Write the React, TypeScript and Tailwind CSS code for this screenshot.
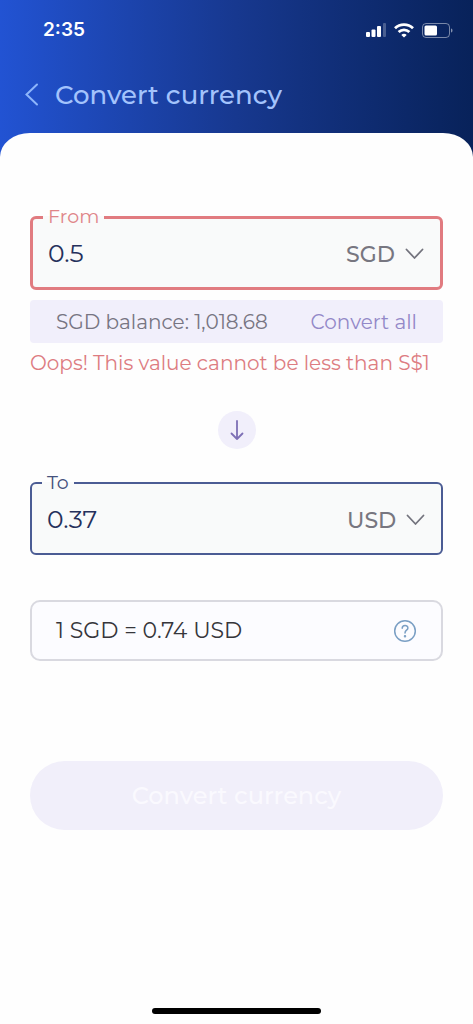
import { useState } from 'react'

const CURRENCIES = ['SGD', 'USD', 'EUR', 'GBP']

function StatusBar() {
  return (
    <div className="flex h-15 items-center justify-between pr-5 pl-[43px]">
      <span className="font-['Inter',sans-serif] text-[19px] font-semibold text-white">2:35</span>
      <div className="flex items-center gap-2" aria-hidden="true">
        <svg width="20" height="14" viewBox="0 0 20 14" fill="#fff">
          <rect x="0" y="9" width="4" height="5" rx="1" />
          <rect x="5.5" y="6.5" width="4" height="7.5" rx="1" />
          <rect x="11" y="3" width="4" height="11" rx="1" />
          <rect x="17" y="0" width="3" height="14" rx="1" opacity="0.25" />
        </svg>
        <svg width="20" height="15" viewBox="0 0 20 15" fill="none" stroke="#fff" strokeWidth="2.8">
          <path d="M1 5.2C6 .4 14 .4 19 5.2" />
          <path d="M4.6 9c3.1-2.9 7.7-2.9 10.8 0" />
          <path d="M10 14.6 7.3 11.9c1.5-1.4 3.9-1.4 5.4 0z" fill="#fff" stroke="none" />
        </svg>
        <svg width="31" height="15" viewBox="0 0 31 15" fill="none">
          <rect x="0.5" y="0.5" width="27" height="14" rx="3.5" stroke="#fff" strokeOpacity="0.45" />
          <rect x="2.5" y="2.5" width="12.5" height="10" rx="1.5" fill="#fff" />
          <path d="M29 5.5c2 .6 2 3.4 0 4z" fill="#fff" fillOpacity="0.5" />
        </svg>
      </div>
    </div>
  )
}

function ChevronIcon() {
  return (
    <svg
      className="pointer-events-none col-start-1 row-start-1 self-center justify-self-end"
      width="19"
      height="12"
      viewBox="0 0 19 12"
      fill="none"
      stroke="#73737d"
      strokeWidth="1.8"
      strokeLinecap="round"
      strokeLinejoin="round"
    >
      <path d="M1.5 1.5 9.5 10l8-8.5" />
    </svg>
  )
}

type AmountFieldProps = {
  id: string
  label: string
  value: string
  onChange: (value: string) => void
  currency: string
  onCurrencyChange: (currency: string) => void
  invalid?: boolean
}

function AmountField({ id, label, value, onChange, currency, onCurrencyChange, invalid }: AmountFieldProps) {
  return (
    <fieldset
      className={
        invalid
          ? 'min-w-0 rounded-md border-[3px] border-[#e17b80] bg-[#f9fafa] pr-4 pl-2.5'
          : 'min-w-0 rounded-md border-2 border-[#4b5c94] bg-[#f9fafa] pr-4 pl-2.5'
      }
    >
      <legend
        className={invalid ? 'px-[5px] text-[19px] leading-5 text-[#df8589]' : 'px-[5px] text-[19px] leading-5 text-[#46527d]'}
      >
        <label htmlFor={id}>{label}</label>
      </legend>
      <div className="flex h-15 items-center justify-between pb-1.5 pl-[5px]">
        <input
          id={id}
          inputMode="decimal"
          className="w-0 flex-1 bg-transparent text-[25px] text-[#25305c] outline-none"
          value={value}
          onChange={(e) => onChange(e.target.value)}
        />
        <div className="grid w-[78px]">
          <select
            aria-label={`${label} currency`}
            className="col-start-1 row-start-1 appearance-none bg-transparent text-[22px] font-medium text-[#777680] outline-none"
            value={currency}
            onChange={(e) => onCurrencyChange(e.target.value)}
          >
            {CURRENCIES.map((c) => (
              <option key={c}>{c}</option>
            ))}
          </select>
          <ChevronIcon />
        </div>
      </div>
    </fieldset>
  )
}

export default function App() {
  const [from, setFrom] = useState('0.5')
  const [to, setTo] = useState('0.37')
  const [fromCurrency, setFromCurrency] = useState('SGD')
  const [toCurrency, setToCurrency] = useState('USD')

  const tooLow = Number(from) < 1

  return (
    <div className="flex min-h-screen flex-col bg-linear-to-r from-[#2253d3] via-[#17388f] to-[#08225a] font-['Montserrat','Inter',sans-serif]">
      <StatusBar />
      <header className="flex h-[73px] items-center gap-4 px-6 pb-1">
        <button type="button" aria-label="Back">
          <svg width="15" height="24" viewBox="0 0 15 24" fill="none" stroke="#8db5fb" strokeWidth="2" strokeLinecap="round">
            <path d="M13 1.5 2.5 11.5 13 21.5" />
          </svg>
        </button>
        <h1 className="text-[26px] leading-8 font-medium text-[#a3c3fc]">Convert currency</h1>
      </header>

      <main className="flex flex-1 flex-col rounded-t-[30px_24px] bg-[#fefefe] px-[30px] pt-[74px]">
        <AmountField
          id="from"
          label="From"
          value={from}
          onChange={setFrom}
          currency={fromCurrency}
          onCurrencyChange={setFromCurrency}
          invalid={tooLow}
        />
        <div className="mt-2.5 flex h-[43px] items-center justify-between rounded-sm bg-[#f1effb] px-[26px] text-xl">
          <span className="text-[#777582]">SGD balance: 1,018.68</span>
          <button type="button" className="text-[#9388c8]" onClick={() => setFrom('1018.68')}>
            Convert all
          </button>
        </div>
        <p className="mt-1.5 h-7 text-xl leading-7 whitespace-nowrap text-[#dd7c81]">
          {tooLow && 'Oops! This value cannot be less than S$1'}
        </p>

        <button
          type="button"
          aria-label="Swap currencies"
          className="mt-[34px] mb-6 flex size-[38px] items-center justify-center self-center rounded-full bg-[#f1effb]"
        >
          <svg width="14" height="22" viewBox="0 0 14 22" fill="none" stroke="#7d6fb5" strokeWidth="1.8" strokeLinecap="round" strokeLinejoin="round">
            <path d="M7 2v18M1.5 14.5 7 20l5.5-5.5" />
          </svg>
        </button>

        <AmountField
          id="to"
          label="To"
          value={to}
          onChange={setTo}
          currency={toCurrency}
          onCurrencyChange={setToCurrency}
        />

        <div className="mt-[45px] flex h-[61px] items-center justify-between rounded-[10px] border-2 border-[#d9d9e0] bg-[#fcfcff] px-6">
          <span className="text-[22px] text-[#36363b]">1 SGD = 0.74 USD</span>
          <button type="button" aria-label="About this rate">
            <svg width="24" height="24" viewBox="0 0 24 24" fill="none" stroke="#7a9fc4" strokeWidth="1.5" strokeLinecap="round">
              <circle cx="12" cy="12" r="10.3" />
              <path d="M9.2 9.3c0-3.8 5.7-3.7 5.7-.4 0 2.200-2.9 2.400-2.9 5" />
              <circle cx="12" cy="17.200" r="0.5" fill="#7a9fc4" />
            </svg>
          </button>
        </div>

        <button
          type="button"
          disabled={tooLow}
          className="mt-25 h-[69px] rounded-full bg-[#f1effa] text-2xl font-medium text-[#faf9fe]"
        >
          Convert currency
        </button>

        <div className="mt-auto mb-2.5 h-1.5 w-[169px] self-center rounded-full bg-black" />
      </main>
    </div>
  )
}
